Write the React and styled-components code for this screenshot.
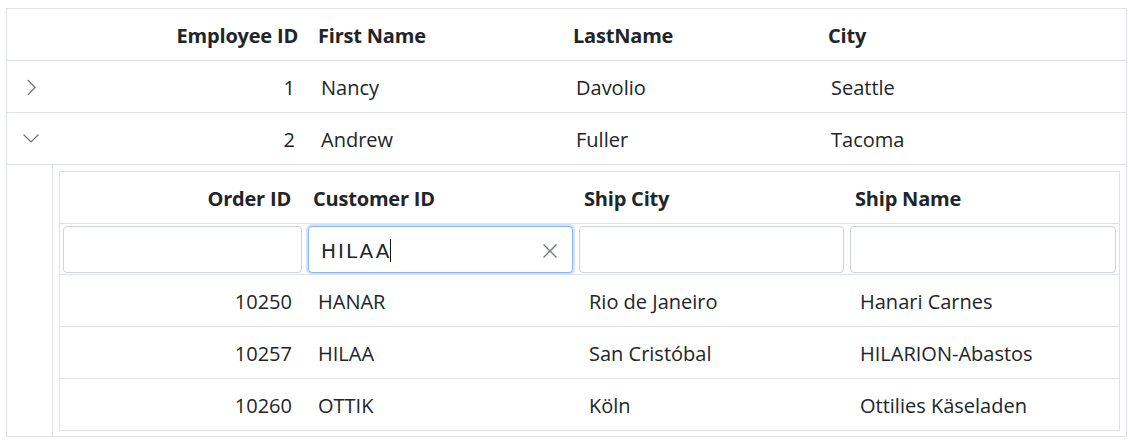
import React from "react";
import styled, { createGlobalStyle, css } from "styled-components";

const Global = createGlobalStyle`
  html, body { margin: 0; padding: 0; background: #ffffff; }
  body {
    font-family: "Open Sans", "Noto Sans", Arial, sans-serif;
    color: #212529;
  }
`;

const LINE = "#dee2e6";

const Page = styled.div`
  padding: 8px 0 0 6px;
`;

const Grid = styled.div`
  width: 1121px;
  box-sizing: border-box;
  border: 1px solid ${LINE};
  background: #fff;
`;

const OuterRow = styled.div`
  display: grid;
  grid-template-columns: 45px 256px 255px 255px 1fr;
  height: 52px;
  box-sizing: border-box;
  border-bottom: 1px solid ${LINE};
`;

const HeadCell = styled.div`
  display: flex;
  align-items: center;
  justify-content: ${(p) => (p.$right ? "flex-end" : "flex-start")};
  padding: ${(p) => p.$pad || "2px 10px 0 10px"};
  font-size: 20px;
  font-weight: 700;
  letter-spacing: -0.2px;
  color: #212529;
  white-space: nowrap;
  overflow: hidden;
`;

const Cell = styled.div`
  display: flex;
  align-items: center;
  justify-content: ${(p) => (p.$right ? "flex-end" : "flex-start")};
  padding: 2px 13px 0 13px;
  font-size: 20px;
  font-weight: 400;
  color: #212529;
  white-space: nowrap;
  overflow: hidden;
`;

const ExpandCell = styled.div`
  display: flex;
  align-items: center;
  padding-left: 16px;
`;

const Chevron = styled.svg`
  width: 16px;
  height: 16px;
  display: block;
  fill: none;
  stroke: #6c757d;
  stroke-width: 1.2;
`;

const DetailRow = styled.div`
  display: grid;
  grid-template-columns: 45px 1fr;
`;

const DetailCell = styled.div`
  border-left: 1px solid ${LINE};
  padding: 6px 6px 5px 6px;
`;

const InnerGrid = styled.div`
  border: 1px solid ${LINE};
`;

const InnerRow = styled.div`
  display: grid;
  grid-template-columns: 245px 271px 271px 1fr;
  height: ${(p) => (p.$last || p.$filter ? "51px" : "52px")};
  box-sizing: border-box;
  border-bottom: ${(p) => (p.$last ? "none" : `1px solid ${LINE}`)};
`;

const FilterCell = styled.div`
  padding: 2px 3px 1px 3px;
  overflow: hidden;
`;

const FilterBox = styled.div`
  height: 47px;
  box-sizing: border-box;
  border: 1px solid #ced4da;
  border-radius: 4px;
  background: #fff;
  display: flex;
  align-items: center;
  padding: 0 14px 0 12px;
  ${(p) =>
    p.$focused &&
    css`
      border-color: #86b7fe;
      box-shadow: 0 0 0 2px rgba(13, 110, 253, 0.2);
    `}
`;

const FilterText = styled.span`
  font-family: "DejaVu Sans", Verdana, sans-serif;
  font-size: 20px;
  letter-spacing: 2px;
  color: #212529;
  padding-top: 2px;
`;

const Caret = styled.span`
  display: inline-block;
  width: 1px;
  height: 23px;
  background: #111;
  margin-left: -1px;
  margin-top: 2px;
`;

const Spacer = styled.span`
  flex: 1;
`;

const ClearIcon = styled.svg`
  width: 16px;
  height: 16px;
  display: block;
  stroke: #6c757d;
  stroke-width: 1.3;
  fill: none;
  margin-top: 2px;
`;

const employees = [
  { id: 1, first: "Nancy", last: "Davolio", city: "Seattle", open: false },
  { id: 2, first: "Andrew", last: "Fuller", city: "Tacoma", open: true },
];

const orders = [
  { id: 10250, cust: "HANAR", city: "Rio de Janeiro", ship: "Hanari Carnes" },
  { id: 10257, cust: "HILAA", city: "San Cristóbal", ship: "HILARION-Abastos" },
  { id: 10260, cust: "OTTIK", city: "Köln", ship: "Ottilies Käseladen" },
];

function ChevronRight() {
  return (
    <Chevron viewBox="0 0 16 16">
      <path d="M4.8 1 L12.2 8.5 L4.8 16" />
    </Chevron>
  );
}

function ChevronDown() {
  return (
    <Chevron viewBox="0 0 16 16">
      <path d="M0.5 3.5 L8 11 L15.5 3.5" />
    </Chevron>
  );
}

export default function App() {
  return (
    <>
      <Global />
      <Page>
        <Grid>
          <OuterRow>
            <div />
            <HeadCell $right>Employee ID</HeadCell>
            <HeadCell>First Name</HeadCell>
            <HeadCell>LastName</HeadCell>
            <HeadCell>City</HeadCell>
          </OuterRow>
          {employees.map((e) => (
            <OuterRow key={e.id}>
              <ExpandCell>{e.open ? <ChevronDown /> : <ChevronRight />}</ExpandCell>
              <Cell $right>{e.id}</Cell>
              <Cell>{e.first}</Cell>
              <Cell>{e.last}</Cell>
              <Cell>{e.city}</Cell>
            </OuterRow>
          ))}
          <DetailRow>
            <div />
            <DetailCell>
              <InnerGrid>
                <InnerRow>
                  <HeadCell $right $pad="2px 14px 0 8px">Order ID</HeadCell>
                  <HeadCell $pad="2px 8px 0 8px">Customer ID</HeadCell>
                  <HeadCell $pad="2px 8px 0 8px">Ship City</HeadCell>
                  <HeadCell $pad="2px 8px 0 8px">Ship Name</HeadCell>
                </InnerRow>
                <InnerRow $filter>
                  <FilterCell>
                    <FilterBox />
                  </FilterCell>
                  <FilterCell>
                    <FilterBox $focused>
                      <FilterText>HILAA</FilterText>
                      <Caret />
                      <Spacer />
                      <ClearIcon viewBox="0 0 16 16">
                        <path d="M1.5 1.5 L14.5 14.5 M14.5 1.5 L1.5 14.5" />
                      </ClearIcon>
                    </FilterBox>
                  </FilterCell>
                  <FilterCell>
                    <FilterBox />
                  </FilterCell>
                  <FilterCell>
                    <FilterBox />
                  </FilterCell>
                </InnerRow>
                {orders.map((o, i) => (
                  <InnerRow key={o.id} $last={i === orders.length - 1}>
                    <Cell $right>{o.id}</Cell>
                    <Cell>{o.cust}</Cell>
                    <Cell>{o.city}</Cell>
                    <Cell>{o.ship}</Cell>
                  </InnerRow>
                ))}
              </InnerGrid>
            </DetailCell>
          </DetailRow>
        </Grid>
      </Page>
    </>
  );
}
